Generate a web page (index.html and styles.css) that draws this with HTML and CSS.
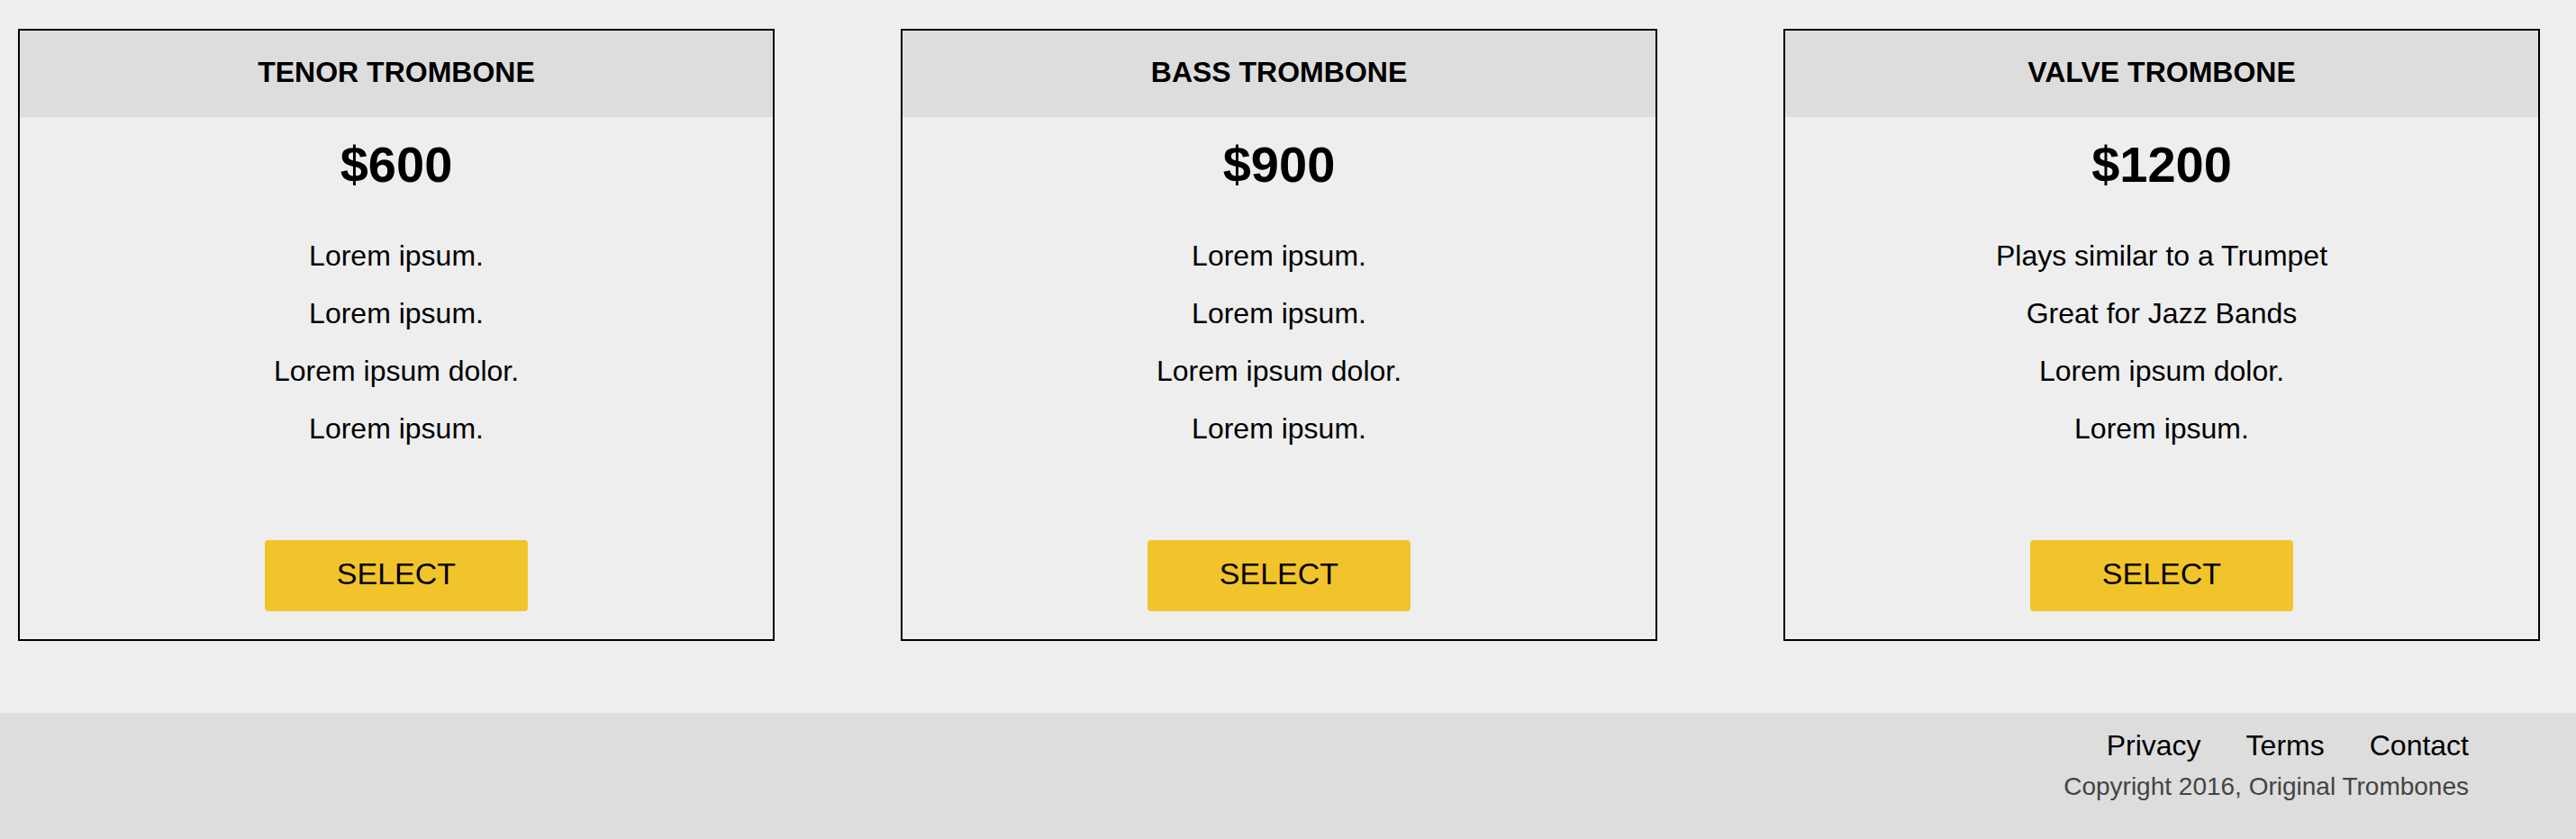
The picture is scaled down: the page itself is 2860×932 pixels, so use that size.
FILE: index.html
```html
<!DOCTYPE html>
<html lang="en">
<head>
<meta charset="utf-8">
<title>Original Trombones</title>
<link rel="stylesheet" href="styles.css">
</head>
<body>
<main class="pricing">
  <section class="card">
    <h3 class="card-title">TENOR TROMBONE</h3>
    <div class="card-body">
      <h2 class="price">$600</h2>
      <ul class="features">
        <li>Lorem ipsum.</li>
        <li>Lorem ipsum.</li>
        <li>Lorem ipsum dolor.</li>
        <li>Lorem ipsum.</li>
      </ul>
      <button class="select-btn">SELECT</button>
    </div>
  </section>
  <section class="card">
    <h3 class="card-title">BASS TROMBONE</h3>
    <div class="card-body">
      <h2 class="price">$900</h2>
      <ul class="features">
        <li>Lorem ipsum.</li>
        <li>Lorem ipsum.</li>
        <li>Lorem ipsum dolor.</li>
        <li>Lorem ipsum.</li>
      </ul>
      <button class="select-btn">SELECT</button>
    </div>
  </section>
  <section class="card">
    <h3 class="card-title">VALVE TROMBONE</h3>
    <div class="card-body">
      <h2 class="price">$1200</h2>
      <ul class="features">
        <li>Plays similar to a Trumpet</li>
        <li>Great for Jazz Bands</li>
        <li>Lorem ipsum dolor.</li>
        <li>Lorem ipsum.</li>
      </ul>
      <button class="select-btn">SELECT</button>
    </div>
  </section>
</main>
<footer class="site-footer">
  <ul class="footer-links">
    <li>Privacy</li>
    <li>Terms</li>
    <li>Contact</li>
  </ul>
  <p class="copyright">Copyright 2016, Original Trombones</p>
</footer>
</body>
</html>
```
FILE: styles.css
```css
* {
  box-sizing: border-box;
}

html, body {
  margin: 0;
  padding: 0;
  background: #eeeeee;
  font-family: "Liberation Sans", Arial, Helvetica, sans-serif;
  color: #000;
}

.pricing {
  display: flex;
  gap: 140px;
  padding: 32px 0 0 20px;
}

.card {
  width: 840px;
  height: 680px;
  border: 2px solid #000;
  background: #eeeeee;
  display: flex;
  flex-direction: column;
}

.card-title {
  margin: 0;
  height: 96px;
  padding-top: 28px;
  background: #dddddd;
  font-size: 32px;
  font-weight: bold;
  text-align: center;
  line-height: 37px;
}

.card-body {
  display: flex;
  flex-direction: column;
  align-items: center;
  flex: 1;
}

.price {
  margin: 21px 0 0;
  font-size: 56px;
  line-height: 64px;
  font-weight: bold;
}

.features {
  list-style: none;
  margin: 37px 0 0;
  padding: 0;
  text-align: center;
  font-size: 32px;
  line-height: 64px;
}

.select-btn {
  margin-top: 92px;
  width: 292px;
  height: 79px;
  border: none;
  border-radius: 4px;
  background: #f2c42b;
  font-family: "Liberation Sans", Arial, Helvetica, sans-serif;
  font-size: 34px;
  color: #000;
  padding: 0 0 4px;
}

.site-footer {
  margin-top: 80px;
  background: #dddddd;
  min-height: 140px;
  padding: 18px 119px 30px 0;
  text-align: right;
}

.footer-links {
  list-style: none;
  margin: 0;
  padding: 0;
  display: flex;
  justify-content: flex-end;
  gap: 50px;
  font-size: 32px;
  line-height: 37px;
}

.copyright {
  margin: 11px 0 0;
  font-size: 28px;
  line-height: 32px;
  color: #444444;
}
```
